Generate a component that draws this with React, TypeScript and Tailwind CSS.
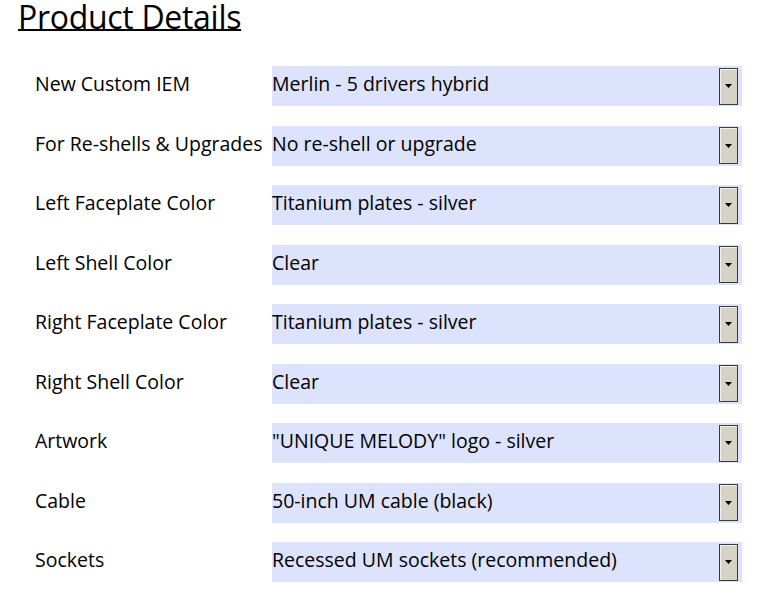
import type { FC } from 'react';

interface RowProps {
    label: string,
    value: string,
}

const rows: RowProps[] = [
    { label: 'New Custom IEM', value: 'Merlin - 5 drivers hybrid' },
    { label: 'For Re-shells & Upgrades', value: 'No re-shell or upgrade' },
    { label: 'Left Faceplate Color', value: 'Titanium plates - silver' },
    { label: 'Left Shell Color', value: 'Clear' },
    { label: 'Right Faceplate Color', value: 'Titanium plates - silver' },
    { label: 'Right Shell Color', value: 'Clear' },
    { label: 'Artwork', value: '"UNIQUE MELODY" logo - silver' },
    { label: 'Cable', value: '50-inch UM cable (black)' },
    { label: 'Sockets', value: 'Recessed UM sockets (recommended)' },
];

const DropButton: FC = () => (
    <div className="flex h-[37px] w-[19px] items-center justify-center border border-[#3a3a3a] bg-[#d6d2c6] shadow-[inset_1px_1px_0_#f4f2ec]">
        <svg width="7" height="4" viewBox="0 0 7 4">
            <polygon points="0,0 7,0 3.5,4" fill="#000" />
        </svg>
    </div>
);

const Row: FC<RowProps> = ({ label, value }) => (
    <div className="flex h-[40px] items-center">
        <div className="w-[272px] shrink-0 pl-[35px] pb-[4px] whitespace-nowrap">{label}</div>
        <div className="flex h-[40px] w-[470px] shrink-0 items-center justify-between bg-[#dde3fd] pr-[4px]">
            <span className="pb-[4px] whitespace-nowrap">{value}</span>
            <DropButton />
        </div>
    </div>
);

export default function App() {
    return (
        <div className="h-[593px] w-[757px] overflow-hidden bg-white text-[19.5px] text-black" style={{ fontFamily: '"Open Sans", "Noto Sans", sans-serif' }}>
            <h1 className="pl-[18px] text-[32px] leading-[34px] tracking-[-0.3px] underline decoration-[1.5px] underline-offset-0">Product Details</h1>
            <div className="mt-[32px] flex flex-col gap-[19.5px]">
                {rows.map((r, i) => <Row key={i} {...r} />)}
            </div>
        </div>
    );
}
